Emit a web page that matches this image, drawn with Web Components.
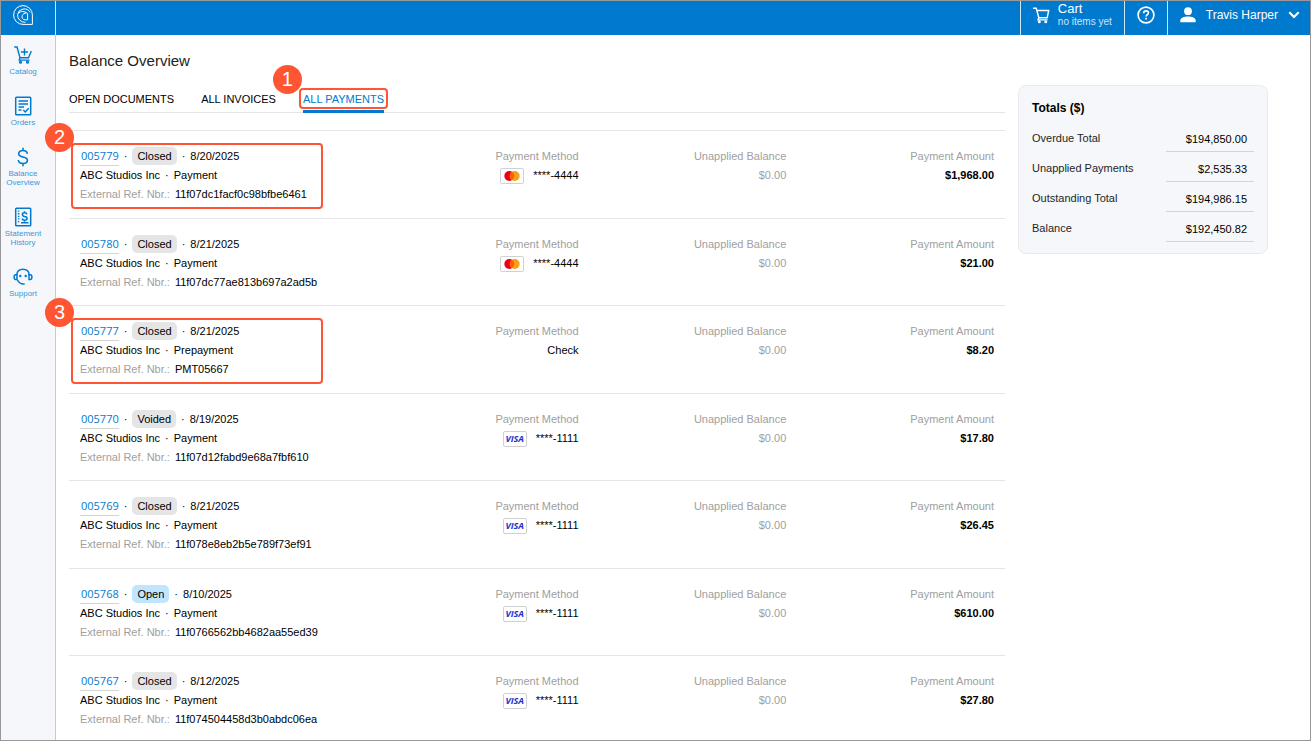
<!DOCTYPE html>
<html lang="en">
<head>
<meta charset="utf-8">
<title>Balance Overview</title>
<style>
    body {
        margin: 0;
        font: 11px/19px "Liberation Sans", Arial, sans-serif;
        color: #000;
    }
</style>
</head>
<body>
<portal-app></portal-app>

<script>
const ICONS = {
    logo: '<svg width="20" height="20" viewBox="0 0 20 20" fill="none" stroke="#fff" stroke-width="1"><path d="M19.400 19.400H10A9.400 9.400 0 1 1 19.400 10z"/><path d="M12.500 17.300A7.300 7.300 0 0 1 4.600 9.500 6.700 6.700 0 0 1 17 7.300"/><path d="M5 8.500C7.500 5.800 11.800 5.800 14.600 8.700V14.800H12.500C9.500 14.800 8.400 12.500 9.300 10.500 9.900 9 11.300 8 13.500 8"/></svg>',
    cart: '<svg width="17" height="17" viewBox="0 0 17 17" fill="none" stroke="#fff" stroke-width="1.4"><path d="M0 1.200h3.200l2.600 9.500h8.400l1.500-7.200H4"/><path d="M5.800 10.700l-.8 2.200h9.500"/><circle cx="6.300" cy="14.700" r=".8"/><circle cx="12.800" cy="14.700" r=".8"/></svg>',
    help: '<svg width="18" height="18" viewBox="0 0 18 18" fill="none" stroke="#fff" stroke-width="1.600"><circle cx="9" cy="9" r="7.900"/><path d="M6.700 7.300c0-1.500 1-2.400 2.400-2.400s2.300.9 2.300 2.100c0 1.700-2.300 1.800-2.300 3.500"/><path d="M8.200 12.600h1.700"/></svg>',
    user: '<svg width="16" height="16" viewBox="0 0 16 16" fill="#fff"><circle cx="8" cy="4.200" r="3.900"/><path d="M.3 15.300v-1.600C.3 10.900 4.200 9.600 8 9.600s7.700 1.300 7.700 4.100v1.600z"/></svg>',
    chevron: '<svg width="12" height="8" viewBox="0 0 12 8" fill="none" stroke="#fff" stroke-width="2.200"><path d="M1.300 1.300L6 6l4.700-4.700"/></svg>',
    catalog: '<svg width="20" height="20" viewBox="0 0 20 20" fill="none" stroke="#007acf" stroke-width="1.400"><path d="M1.200 2H4l3 10.700h8.500L18.300 6"/><path d="M7 12.700l-.8 2.400h10.300M8 7h7M11.500 3.500v7"/><circle cx="7.500" cy="17.200" r=".9"/><circle cx="14.500" cy="17.200" r=".9"/></svg>',
    orders: '<svg width="20" height="20" viewBox="0 0 20 20" fill="none" stroke="#007acf" stroke-width="1.500"><rect x="2.700" y="1.200" width="15" height="17.500" rx=".8"/><path d="M5.500 5h9.500M5.500 8h9.500M5.500 11h5.500M5.500 14h3"/><path d="M10.300 14l2 2 3.400-3.800"/></svg>',
    balance: '<svg width="20" height="20" viewBox="0 0 20 20" fill="none" stroke="#007acf" stroke-width="1.600"><path d="M14.300 6.800C14.100 4.700 12.500 3.500 10 3.500 7.400 3.500 5.700 4.700 5.700 6.700c0 4.700 8.700 2 8.700 6.500 0 2-1.800 3.300-4.400 3.300S5.500 15.200 5.300 13M10 .8v2.700M10 16.500v2.700"/></svg>',
    statement: '<svg width="20" height="20" viewBox="0 0 20 20" fill="none" stroke="#007acf" stroke-width="1.500"><rect x="2.700" y="1.200" width="15" height="17.500" rx=".8"/><path d="M5.600 3.500v13" stroke-dasharray="1.300 1.300"/><path d="M13.900 7.300c-.2-1-1-1.500-2.300-1.500-2.900 0-3 3.200 0 3.600 3.300.3 3.200 3.800 0 3.800-1.400 0-2.300-.6-2.500-1.700M11.500 4.300v1.500M11.500 13.200v1.500M8 15.800h7.500"/></svg>',
    support: '<svg width="20" height="20" viewBox="0 0 20 20" fill="none" stroke="#007acf" stroke-width="1.500"><path d="M3.600 8C4.200 4 6.700 2.300 10 2.300S15.800 4 16.400 8"/><path d="M4 7.700H2.600c-2 0-2 4.800 0 4.800H4zM16 7.700h1.400c2 0 2 4.800 0 4.800H16z"/><path d="M4.500 13c1.200 2.500 3.200 4 6 4h1.200"/><g fill="#007acf" stroke="none"><circle cx="7.300" cy="9" r="1.200"/><circle cx="12.700" cy="9" r="1.200"/></g></svg>',
    mastercard: '<svg width="16" height="12" viewBox="0 0 16 12"><circle cx="5.300" cy="6" r="5" fill="#eb001b"/><circle cx="10.700" cy="6" r="5" fill="#f79e1b"/><path d="M8 1.800a5 5 0 0 1 0 8.400 5 5 0 0 1 0-8.400z" fill="#ff5f00"/></svg>'
};

const NAV = [
    ['catalog', 'Catalog'],
    ['orders', 'Orders'],
    ['balance', 'Balance Overview'],
    ['statement', 'Statement History'],
    ['support', 'Support']
];

const PAYMENTS = [
    { id: '005779', status: 'Closed', date: '8/20/2025', type: 'Payment', ref: '11f07dc1facf0c98bfbe6461', card: 'mastercard', method: '****-4444', amount: '$1,968.00', callout: 2 },
    { id: '005780', status: 'Closed', date: '8/21/2025', type: 'Payment', ref: '11f07dc77ae813b697a2ad5b', card: 'mastercard', method: '****-4444', amount: '$21.00' },
    { id: '005777', status: 'Closed', date: '8/21/2025', type: 'Prepayment', ref: 'PMT05667', method: 'Check', amount: '$8.20', callout: 3 },
    { id: '005770', status: 'Voided', date: '8/19/2025', type: 'Payment', ref: '11f07d12fabd9e68a7fbf610', card: 'visa', method: '****-1111', amount: '$17.80' },
    { id: '005769', status: 'Closed', date: '8/21/2025', type: 'Payment', ref: '11f078e8eb2b5e789f73ef91', card: 'visa', method: '****-1111', amount: '$26.45' },
    { id: '005768', status: 'Open', date: '8/10/2025', type: 'Payment', ref: '11f0766562bb4682aa55ed39', card: 'visa', method: '****-1111', amount: '$610.00' },
    { id: '005767', status: 'Closed', date: '8/12/2025', type: 'Payment', ref: '11f074504458d3b0abdc06ea', card: 'visa', method: '****-1111', amount: '$27.80' }
];

const TOTALS = [
    ['Overdue Total', '$194,850.00'],
    ['Unapplied Payments', '$2,535.33'],
    ['Outstanding Total', '$194,986.15'],
    ['Balance', '$192,450.82']
];

// attaches the root and renders once
class BaseElement extends HTMLElement {
    constructor() {
        super();
        this._shadowRoot = this.attachShadow({mode: 'open'});
    }

    connectedCallback() {
        this._shadowRoot.innerHTML = this._render();
    }
}

class PortalIcon extends BaseElement {
    _render() {
        return `
            <style>
                :host { display: block; flex: none; }
                svg { display: block; }
            </style>
            ${ICONS[this.getAttribute('name')]}
        `;
    }
}

class CallOut extends BaseElement {
    _render() {
        return `
            <style>
                :host {
                    position: absolute;
                    box-sizing: border-box;
                    border: 2px solid #ff5533;
                    border-radius: 4px;
                    pointer-events: none;
                    z-index: 2;
                }
                span {
                    position: absolute;
                    left: -28px;
                    top: var(--badge-top, -22px);
                    width: 29px;
                    height: 29px;
                    border-radius: 50%;
                    background: #ff5533;
                    color: #fff;
                    font: 20px/29px "Liberation Sans", Arial, sans-serif;
                    text-align: center;
                }
            </style>
            <span><slot></slot></span>
        `;
    }
}

class PortalHeader extends BaseElement {
    _render() {
        return `
            <style>
                :host {
                    display: flex;
                    height: 34px;
                    background: #007acf;
                    color: #fff;
                }
                .logo {
                    box-sizing: border-box;
                    width: 55px;
                    padding: 4px 0 0 12px;
                    border-right: 1px solid #cfe4f5;
                }
                .spacer { flex: 1; }
                button {
                    display: flex;
                    align-items: center;
                    margin: 0;
                    border: 0;
                    border-left: 1px solid #cfe4f5;
                    padding: 0 12px 6px;
                    background: none;
                    color: inherit;
                    font: 12px/14px "Liberation Sans", Arial, sans-serif;
                    text-align: left;
                }
                .cart { gap: 8px; }
                .cart b { display: block; font-size: 13px; line-height: 14px; font-weight: normal; }
                .cart small { display: block; font-size: 10px; line-height: 12px; color: #cfe4f5; }
                .user { gap: 10px; padding-right: 10px; }
            </style>
            <a class="logo" href="#" aria-label="Home"><portal-icon name="logo"></portal-icon></a>
            <div class="spacer"></div>
            <button class="cart"><portal-icon name="cart"></portal-icon><span><b>Cart</b><small>no items yet</small></span></button>
            <button aria-label="Help"><portal-icon name="help"></portal-icon></button>
            <button class="user"><portal-icon name="user"></portal-icon>Travis Harper<portal-icon name="chevron"></portal-icon></button>
        `;
    }
}

class PortalNav extends BaseElement {
    _render() {
        return `
            <style>
                :host {
                    display: block;
                    box-sizing: border-box;
                    flex: none;
                    width: 55px;
                    padding: 10px 10px 0 0;
                    border-right: 1px solid #c8cbce;
                    background: #f5f7fa;
                }
                nav { display: grid; gap: 20px; }
                a {
                    display: grid;
                    justify-items: center;
                    gap: 2px;
                    color: #3a97d9;
                    font-size: 8px;
                    line-height: 9px;
                    text-align: center;
                    text-decoration: none;
                }
            </style>
            <nav>
                ${NAV.map(([icon, label]) => `<a href="#"><portal-icon name="${icon}"></portal-icon>${label}</a>`).join('')}
            </nav>
        `;
    }
}

class PortalTabs extends BaseElement {
    _render() {
        return `
            <style>
                :host {
                    display: flex;
                    gap: 27px;
                    border-bottom: 1px solid #e5e5e5;
                }
                ::slotted(a) {
                    position: relative;
                    margin-bottom: -1px;
                    padding-bottom: 1px;
                    border-bottom: 3px solid transparent;
                    color: #000;
                    line-height: 20px;
                    text-decoration: none;
                }
                ::slotted(a[aria-current]) {
                    border-color: #007acf;
                    color: #007acf;
                }
            </style>
            <slot></slot>
        `;
    }
}

class StatusPill extends BaseElement {
    _render() {
        return `
            <style>
                :host {
                    padding: 0 5px;
                    border-radius: 5px;
                    background: #e5e5e5;
                    line-height: 18px;
                }
                :host([status="Open"]) { background: #bfe5ff; }
            </style>
            ${this.getAttribute('status')}
        `;
    }
}

class CardBadge extends BaseElement {
    _render() {
        const brand = this.getAttribute('brand');
        return `
            <style>
                :host {
                    display: flex;
                    align-items: center;
                    justify-content: center;
                    box-sizing: border-box;
                    width: 24px;
                    height: 16px;
                    border: 1px solid #d0d0d0;
                    border-radius: 2px;
                    color: #1a34c8;
                    font: italic bold 9px/14px "Open Sans", sans-serif;
                }
            </style>
            ${brand === 'visa' ? 'VISA' : `<portal-icon name="${brand}"></portal-icon>`}
        `;
    }
}

class PaymentRow extends BaseElement {
    _render() {
        const p = this.payment;
        return `
            <style>
                :host {
                    display: grid;
                    grid-template-columns: 7fr 5fr 5fr 5fr;
                    position: relative;
                    padding: 15px 11px 13px;
                    border-top: 1px solid #e5e5e5;
                }
                :host(:nth-child(odd)) { padding-bottom: 14px; }
                .line {
                    display: flex;
                    align-items: center;
                    gap: 5px;
                    height: 19px;
                    white-space: nowrap;
                }
                .line.first { height: 20px; }
                .end { justify-content: flex-end; }
                .muted { color: #a0a0a0; }
                .card { gap: 9px; }
                .id {
                    padding-left: 1px;
                    border-bottom: 1px solid #d5d5d5;
                    color: #007acf;
                    font-family: "Open Sans", sans-serif;
                    line-height: 19px;
                    text-decoration: none;
                }
                call-out {
                    left: 2px;
                    top: 12px;
                    width: 252px;
                    height: 66px;
                }
            </style>
            <div>
                <div class="line first">
                    <a class="id" href="#">${p.id}</a><span>·</span>
                    <status-pill status="${p.status}"></status-pill><span>·</span><span>${p.date}</span>
                </div>
                <div class="line"><span>ABC Studios Inc</span><span>·</span><span>${p.type}</span></div>
                <div class="line"><span class="muted">External Ref. Nbr.:</span><span>${p.ref}</span></div>
            </div>
            <div>
                <div class="line first end muted">Payment Method</div>
                <div class="line end card">${p.card ? `<card-badge brand="${p.card}"></card-badge>` : ''}<span>${p.method}</span></div>
            </div>
            <div class="muted">
                <div class="line first end">Unapplied Balance</div>
                <div class="line end">$0.00</div>
            </div>
            <div>
                <div class="line first end muted">Payment Amount</div>
                <div class="line end"><b>${p.amount}</b></div>
            </div>
            ${p.callout ? `<call-out>${p.callout}</call-out>` : ''}
        `;
    }
}

class PaymentList extends BaseElement {
    connectedCallback() {
        this._shadowRoot.innerHTML = '<style>:host { display: block; }</style>';
        const list = document.createElement('section');
        PAYMENTS.forEach(payment => {
            const row = document.createElement('payment-row');
            row.payment = payment;
            list.appendChild(row);
        });
        this._shadowRoot.appendChild(list);
    }
}

class TotalsCard extends BaseElement {
    _render() {
        return `
            <style>
                :host {
                    display: block;
                    box-sizing: border-box;
                    padding: 12px 13px 11px;
                    border: 1px solid #e8eaec;
                    border-radius: 8px;
                    background: #f5f7fa;
                }
                h2 {
                    margin: 0 0 9px;
                    font-size: 12px;
                    line-height: 20px;
                }
                dl { margin: 0; }
                div {
                    display: flex;
                    justify-content: space-between;
                    margin-bottom: 5px;
                }
                div:last-child { margin-bottom: 0; }
                dt { color: #1f1f1f; line-height: 23px; }
                dd {
                    box-sizing: border-box;
                    width: 88px;
                    margin: 0;
                    padding-right: 7px;
                    border-bottom: 1px solid #d2d4d7;
                    line-height: 24px;
                    text-align: right;
                }
            </style>
            <h2>Totals ($)</h2>
            <dl>
                ${TOTALS.map(([label, value]) => `<div><dt>${label}</dt><dd>${value}</dd></div>`).join('')}
            </dl>
        `;
    }
}

class PortalApp extends BaseElement {
    _render() {
        return `
            <style>
                :host {
                    display: flex;
                    flex-direction: column;
                    box-sizing: border-box;
                    height: 100vh;
                    border: 1px solid #999;
                    overflow: hidden;
                    background: #fff;
                }
                .body {
                    display: flex;
                    flex: 1;
                    min-height: 0;
                }
                main {
                    display: flex;
                    flex: 1;
                    align-items: flex-start;
                    gap: 13px;
                    padding: 0 42px 0 13px;
                }
                .content { flex: 1; padding-top: 17px; }
                h1 {
                    margin: 0 0 19px;
                    color: #222;
                    font-size: 15px;
                    line-height: 18px;
                    font-weight: normal;
                }
                portal-tabs { margin-bottom: 17px; }
                portal-tabs call-out {
                    --badge-top: -25px;
                    left: -4px;
                    right: -4px;
                    top: -1px;
                    height: 21px;
                }
                totals-card { width: 250px; margin-top: 50px; }
            </style>
            <portal-header></portal-header>
            <div class="body">
                <portal-nav></portal-nav>
                <main>
                    <div class="content">
                        <h1>Balance Overview</h1>
                        <portal-tabs>
                            <a href="#">OPEN DOCUMENTS</a>
                            <a href="#">ALL INVOICES</a>
                            <a href="#" aria-current="page">ALL PAYMENTS<call-out>1</call-out></a>
                        </portal-tabs>
                        <payment-list></payment-list>
                    </div>
                    <totals-card></totals-card>
                </main>
            </div>
        `;
    }
}

window.customElements.define('portal-icon', PortalIcon);
window.customElements.define('call-out', CallOut);
window.customElements.define('portal-header', PortalHeader);
window.customElements.define('portal-nav', PortalNav);
window.customElements.define('portal-tabs', PortalTabs);
window.customElements.define('status-pill', StatusPill);
window.customElements.define('card-badge', CardBadge);
window.customElements.define('payment-row', PaymentRow);
window.customElements.define('payment-list', PaymentList);
window.customElements.define('totals-card', TotalsCard);
window.customElements.define('portal-app', PortalApp);
</script>
</body>
</html>
